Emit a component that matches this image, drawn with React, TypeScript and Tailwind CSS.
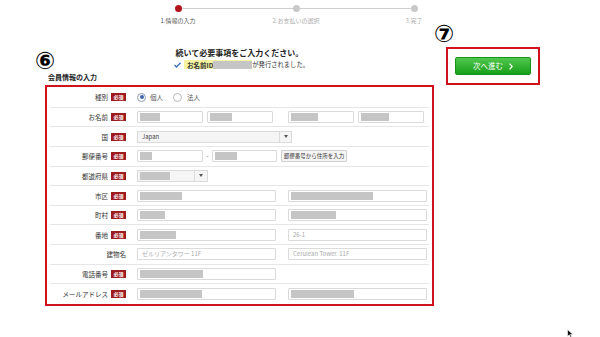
import React from "react";

function Gray({ w }: { w: string }) {
  return <div className={`h-[8px] bg-[#c5c5c5] ${w}`} />;
}

function Inp({ w, children, cls = "" }: { w: string; children?: React.ReactNode; cls?: string }) {
  return (
    <div className={`h-[12px] border border-[#dadada] bg-white rounded-[1px] flex items-center px-[2px] shrink-0 ${w} ${cls}`}>
      {children}
    </div>
  );
}

function Badge() {
  return (
    <span className="w-[15px] h-[8px] bg-[#9d1b1f] text-white text-[5px] leading-[8px] text-center font-bold shrink-0">
      必須
    </span>
  );
}

function Row({ label, req = true, children, last = false }: { label: string; req?: boolean; children?: React.ReactNode; last?: boolean }) {
  return (
    <div className={`flex-1 flex items-center mx-[3px] ${last ? "" : "border-b border-[#e6e6e6]"}`}>
      <div className="w-[76px] flex justify-end items-center gap-[3px] shrink-0">
        <span className="text-[6.5px] leading-[8px] text-[#333]">{label}</span>
        {req && <Badge />}
      </div>
      <div className="ml-[11px] flex items-center">{children}</div>
    </div>
  );
}

function Arrow() {
  return (
    <svg width="4" height="3" viewBox="0 0 4 3">
      <path d="M0 0 L4 0 L2 3 Z" fill="#555" />
    </svg>
  );
}

function Ph({ t }: { t: string }) {
  return <span className="text-[6px] leading-[8px] text-[#aaa] pl-[2px] whitespace-nowrap">{t}</span>;
}

export default function App() {
  return (
    <div className="relative w-[600px] h-[337px] bg-white overflow-hidden font-['Noto_Sans_CJK_JP','Noto_Sans',sans-serif] text-[#333]">
      {/* progress */}
      <div className="relative flex pl-[119px] pt-[5px]">
        <div className="absolute left-[178px] top-[8px] w-[236px] h-[1px] bg-[#cfcfcf]" />
        {[
          { t: "1.情報の入力", on: true },
          { t: "2.お支払いの選択", on: false },
          { t: "3.完了", on: false },
        ].map((s) => (
          <div key={s.t} className="w-[118px] flex flex-col items-center relative">
            <div className={`w-[7px] h-[7px] rounded-full ${s.on ? "bg-[#b3141c]" : "bg-[#c9c9c9]"}`} />
            <div className={`mt-[5px] text-[6px] leading-[8px] ${s.on ? "text-[#555]" : "text-[#aaa]"}`}>{s.t}</div>
          </div>
        ))}
      </div>

      <div className="flex">
        {/* left column */}
        <div className="ml-[45px] w-[389px] flex flex-col">
          <div className="mt-[23px] text-center text-[8px] leading-[10px] font-bold text-[#222]">
            続いて必要事項をご入力ください。
          </div>
          <div className="mt-[2px] flex justify-center items-center pl-[4px]">
            <svg width="7" height="6" viewBox="0 0 7 6" className="mr-[3px]">
              <path d="M0.5 3 L2.5 5 L6.5 0.8" stroke="#3a6db8" strokeWidth="1.3" fill="none" />
            </svg>
            <div className="h-[9px] bg-[#f6f3a0] flex items-center pl-[3px]">
              <span className="text-[6.5px] leading-[8px] font-bold text-[#333]">お名前ID</span>
              <div className="h-[8px] w-[39px] bg-[#c5c5c5]" />
            </div>
            <span className="text-[6.3px] leading-[8px] text-[#333]">が発行されました。</span>
          </div>
          <div className="mt-[4px] ml-[3px] text-[7px] leading-[9px] font-bold text-[#222]">会員情報の入力</div>
          <div className="mt-[3px] h-[221px] border-2 border-[#d0121d] flex flex-col py-[1px]">
            <Row label="種別">
              <div className="w-[9px] h-[9px] rounded-full border border-[#8a9ab5] flex items-center justify-center bg-white">
                <div className="w-[4px] h-[4px] rounded-full bg-[#3d64b0]" />
              </div>
              <span className="ml-[4px] text-[6.5px] leading-[8px] text-[#555]">個人</span>
              <div className="ml-[10px] w-[9px] h-[9px] rounded-full border border-[#b5b5b5] bg-white" />
              <span className="ml-[5px] text-[6.5px] leading-[8px] text-[#555]">法人</span>
            </Row>
            <Row label="お名前">
              <Inp w="w-[66px]"><Gray w="w-[20px]" /></Inp>
              <Inp w="w-[66px]" cls="ml-[4px]"><Gray w="w-[22px]" /></Inp>
              <Inp w="w-[66px]" cls="ml-[15px]"><Gray w="w-[27px]" /></Inp>
              <Inp w="w-[66px]" cls="ml-[4px]"><Gray w="w-[28px]" /></Inp>
            </Row>
            <Row label="国">
              <div className="h-[12px] w-[155px] border border-[#dadada] bg-[#f5f5f5] flex items-center">
                <span className="flex-1 pl-[4px] text-[6px] leading-[8px] text-[#444]">Japan</span>
                <div className="w-[12px] h-full border-l border-[#dadada] flex items-center justify-center">
                  <Arrow />
                </div>
              </div>
            </Row>
            <Row label="郵便番号">
              <Inp w="w-[66px]"><Gray w="w-[12px]" /></Inp>
              <span className="w-[9px] text-center text-[6px] leading-[8px] text-[#555]">-</span>
              <Inp w="w-[65px]"><Gray w="w-[22px]" /></Inp>
              <div className="ml-[4px] h-[12px] w-[66px] border border-[#cfcfcf] bg-[#f5f5f5] rounded-[1px] flex items-center justify-center text-[5.5px] leading-[8px] text-[#333] whitespace-nowrap">
                郵便番号から住所を入力
              </div>
            </Row>
            <Row label="都道府県">
              <div className="h-[12px] w-[71px] border border-[#dadada] bg-[#f5f5f5] flex items-center">
                <div className="flex-1 pl-[2px]"><Gray w="w-[30px]" /></div>
                <div className="w-[13px] h-full border-l border-[#dadada] flex items-center justify-center">
                  <Arrow />
                </div>
              </div>
            </Row>
            <Row label="市区">
              <Inp w="w-[139px]"><Gray w="w-[42px]" /></Inp>
              <Inp w="w-[139px]" cls="ml-[12px]"><Gray w="w-[82px]" /></Inp>
            </Row>
            <Row label="町村">
              <Inp w="w-[139px]"><Gray w="w-[25px]" /></Inp>
              <Inp w="w-[139px]" cls="ml-[12px]"><Gray w="w-[45px]" /></Inp>
            </Row>
            <Row label="番地">
              <Inp w="w-[139px]"><Gray w="w-[36px]" /></Inp>
              <Inp w="w-[139px]" cls="ml-[12px]"><Ph t="26-1" /></Inp>
            </Row>
            <Row label="建物名" req={false}>
              <Inp w="w-[139px]"><Ph t="ゼルリアンタワー 11F" /></Inp>
              <Inp w="w-[139px]" cls="ml-[12px]"><Ph t="Cerulean Tower. 11F" /></Inp>
            </Row>
            <Row label="電話番号">
              <Inp w="w-[139px]"><Gray w="w-[63px]" /></Inp>
            </Row>
            <Row label="メールアドレス" last>
              <Inp w="w-[139px]"><Gray w="w-[62px]" /></Inp>
              <Inp w="w-[139px]" cls="ml-[12px]"><Gray w="w-[63px]" /></Inp>
            </Row>
          </div>
        </div>

        {/* right column */}
        <div className="ml-[12px] mt-[22px]">
          <div className="w-[94px] h-[38px] border-2 border-[#d0121d] flex items-center justify-center">
            <div className="w-[76px] h-[18px] rounded-[2px] border border-[#17921a] bg-gradient-to-b from-[#4fc74c] to-[#13a018] flex items-center justify-center gap-[6px] text-white">
              <span className="text-[7.5px] leading-[10px]">次へ進む</span>
              <svg width="4" height="7" viewBox="0 0 4 7">
                <path d="M0.6 0.6 L3.2 3.5 L0.6 6.4" stroke="white" strokeWidth="1.2" fill="none" />
              </svg>
            </div>
          </div>
        </div>
      </div>

      {/* annotation numbers */}
      <div className="absolute left-[35px] top-[50px] text-[24px] leading-[22px] font-bold text-black font-['DejaVu_Sans',sans-serif]">⑥</div>
      <div className="absolute left-[434px] top-[23px] text-[24px] leading-[22px] font-bold text-black font-['DejaVu_Sans',sans-serif]">⑦</div>

      {/* mouse cursor */}
      <svg className="absolute left-[567px] top-[329px]" width="7" height="9" viewBox="0 0 7 9">
        <path d="M0.5 0.5 L0.5 7.5 L2.3 5.8 L3.6 8.5 L4.7 8 L3.5 5.4 L6 5.4 Z" fill="#111" stroke="white" strokeWidth="0.6" />
      </svg>
    </div>
  );
}
